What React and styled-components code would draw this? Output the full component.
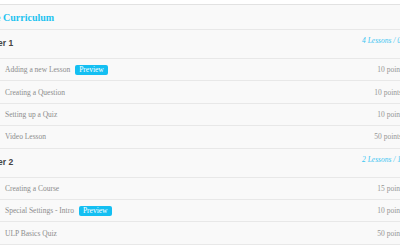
import styled, { createGlobalStyle } from "styled-components";

const chapters = [
  {
    title: "Chapter 1",
    meta: "4 Lessons / 0 Quizzes",
    items: [
      { name: "Adding a new Lesson", points: "10 points", preview: true },
      { name: "Creating a Question", points: "10 points", shift: 3 },
      { name: "Setting up a Quiz", points: "10 points" },
      { name: "Video Lesson", points: "50 points", shift: 3 },
    ],
  },
  {
    title: "Chapter 2",
    meta: "2 Lessons / 1 Quiz",
    items: [
      { name: "Creating a Course", points: "15 points" },
      { name: "Special Settings - Intro", points: "10 points", preview: true },
      { name: "ULP Basics Quiz", points: "50 points" },
    ],
  },
];

const App = () => {
  return (
    <>
      <GlobalStyle />
      <Viewport>
        <Card>
          <Heading>Course Curriculum</Heading>
          {chapters.map((chapter) => (
            <section key={chapter.title}>
              <ChapterHead>
                <ChapterTitle>{chapter.title}</ChapterTitle>
                <ChapterMeta>{chapter.meta}</ChapterMeta>
              </ChapterHead>
              {chapter.items.map((item) => (
                <Row key={item.name}>
                  <ItemName>
                    {item.name}
                    {item.preview && <Badge>Preview</Badge>}
                  </ItemName>
                  <Points $shift={item.shift || 0}>{item.points}</Points>
                </Row>
              ))}
            </section>
          ))}
        </Card>
      </Viewport>
    </>
  );
};

const GlobalStyle = createGlobalStyle`
  body {
    margin: 0;
    background: #ffffff;
    font-family: "Liberation Serif", serif;
  }
`;

const Viewport = styled.div`
  width: 400px;
  height: 250px;
  overflow: hidden;
  padding-top: 4px;
  box-sizing: border-box;
`;

const Card = styled.div`
  margin-left: -30px;
  width: 460px;
  background: #f9f9f9;
  border-top: 1px solid #e2e2e2;
`;

const Heading = styled.h2`
  margin: 0;
  height: 25px;
  display: flex;
  align-items: center;
  padding-top: 1px;
  box-sizing: border-box;
  font-size: 10px;
  font-weight: 700;
  color: #1ec3f0;
  border-bottom: 1px solid #e8e8e8;
`;

const ChapterHead = styled.div`
  display: flex;
  justify-content: space-between;
  align-items: flex-start;
  height: 28px;
  padding-left: 4px;
  border-bottom: 1px solid #e8e8e8;
`;

const ChapterTitle = styled.span`
  margin-top: 8px;
  font-family: "Liberation Sans", Arial, sans-serif;
  font-size: 8.5px;
  font-weight: 700;
  color: #444444;
`;

const ChapterMeta = styled.span`
  width: 68px;
  margin-top: 6px;
  white-space: nowrap;
  font-size: 7.5px;
  font-style: italic;
  color: #3cc6f2;
`;

const Row = styled.div`
  display: flex;
  justify-content: space-between;
  align-items: center;
  height: 21.4px;
  padding: 0 25px 0 35px;
  border-bottom: 1px solid #e8e8e8;
  font-size: 7.5px;
  color: #8c8c8c;
`;

const ItemName = styled.span`
  display: flex;
  align-items: center;
`;

const Badge = styled.span`
  margin-left: 5px;
  padding: 0 4px;
  height: 10px;
  line-height: 10px;
  border-radius: 2px;
  background: #14bff2;
  color: #ffffff;
  font-size: 7.5px;
`;

const Points = styled.span`
  padding-right: ${(p) => p.$shift}px;
  color: #959595;
`;

export default App;
